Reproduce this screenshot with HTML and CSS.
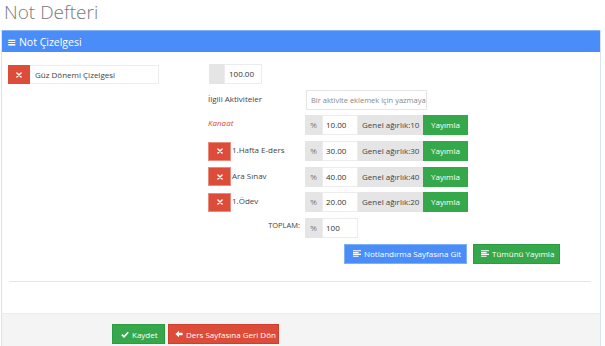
FILE: index.html
```html
<!DOCTYPE html>
<html lang="tr">
<head>
<meta charset="utf-8">
<link rel="stylesheet" href="styles.css">
</head>
<body>
<h1 class="page-title">Not Defteri</h1>
<div class="panel">
  <div class="panel-head"><span class="bars">&#8801;</span> Not Çizelgesi</div>
  <div class="panel-body">
    <div class="layout">
      <div class="left">
        <div class="name-group">
          <span class="btn-x"><svg viewBox="0 0 10 10" width="6" height="6"><path d="M1.5 1.5L8.5 8.5M8.5 1.5L1.5 8.5" stroke="#fff" stroke-width="2.4" stroke-linecap="round"/></svg></span>
          <span class="name-input">Güz Dönemi Çizelgesi</span>
        </div>
      </div>
      <div class="right">
        <div class="row">
          <div class="small-group"><span class="addon blank"></span><span class="field">100.00</span></div>
        </div>
        <div class="row">
          <div class="label top">İlgili Aktiviteler</div>
          <div class="search">Bir aktivite eklemek için yazmaya</div>
        </div>
        <div class="row">
          <div class="label kanaat">Kanaat</div>
          <div class="igroup"><span class="addon pct">%</span><span class="field num">10.00</span><span class="addon weight">Genel ağırlık:10</span><span class="btn-pub">Yayımla</span></div>
        </div>
        <div class="row">
          <div class="label act"><span class="btn-x sm"><svg viewBox="0 0 10 10" width="6" height="6"><path d="M1.5 1.5L8.5 8.5M8.5 1.5L1.5 8.5" stroke="#fff" stroke-width="2.4" stroke-linecap="round"/></svg></span><span class="act-name">1.Hafta E-ders</span></div>
          <div class="igroup"><span class="addon pct">%</span><span class="field num">30.00</span><span class="addon weight">Genel ağırlık:30</span><span class="btn-pub">Yayımla</span></div>
        </div>
        <div class="row">
          <div class="label act"><span class="btn-x sm"><svg viewBox="0 0 10 10" width="6" height="6"><path d="M1.5 1.5L8.5 8.5M8.5 1.5L1.5 8.5" stroke="#fff" stroke-width="2.4" stroke-linecap="round"/></svg></span><span class="act-name">Ara Sınav</span></div>
          <div class="igroup"><span class="addon pct">%</span><span class="field num">40.00</span><span class="addon weight">Genel ağırlık:40</span><span class="btn-pub">Yayımla</span></div>
        </div>
        <div class="row">
          <div class="label act"><span class="btn-x sm"><svg viewBox="0 0 10 10" width="6" height="6"><path d="M1.5 1.5L8.5 8.5M8.5 1.5L1.5 8.5" stroke="#fff" stroke-width="2.4" stroke-linecap="round"/></svg></span><span class="act-name">1.Ödev</span></div>
          <div class="igroup"><span class="addon pct">%</span><span class="field num">20.00</span><span class="addon weight">Genel ağırlık:20</span><span class="btn-pub">Yayımla</span></div>
        </div>
        <div class="row">
          <div class="label total">TOPLAM:</div>
          <div class="igroup"><span class="addon pct">%</span><span class="field num">100</span></div>
        </div>
        <div class="row actions">
          <span class="btn blue"><svg class="ico" viewBox="0 0 10 8" width="8" height="7"><path d="M0 0.6h10M0 2.9h7M0 5.1h10M0 7.4h7" stroke="#fff" stroke-width="1.4"/></svg>Notlandırma Sayfasına Git</span>
          <span class="btn green"><svg class="ico" viewBox="0 0 10 8" width="8" height="7"><path d="M0 0.6h10M0 2.9h7M0 5.1h10M0 7.4h7" stroke="#fff" stroke-width="1.4"/></svg>Tümünü Yayımla</span>
        </div>
      </div>
    </div>
    <hr class="sep">
  </div>
  <div class="panel-foot">
    <span class="btn green save"><svg class="ico" viewBox="0 0 10 8" width="8" height="7"><path d="M1 4.2L3.8 7L9 1.2" stroke="#fff" stroke-width="2" fill="none"/></svg>Kaydet</span>
    <span class="btn red back"><svg class="ico" viewBox="0 0 10 10" width="8" height="8"><path d="M0.5 5L5 0.8V3.3H9.5V6.7H5V9.2Z" fill="#fff"/></svg>Ders Sayfasına Geri Dön</span>
  </div>
</div>
</body>
</html>
```

FILE: styles.css
```css
html, body {
  margin: 0;
  padding: 0;
  background: #fff;
  overflow: hidden;
}
body {
  font-family: "Open Sans", "DejaVu Sans", sans-serif;
  font-size: 8px;
  color: #333;
  width: 605px;
  height: 346px;
}
.page-title {
  margin: 0;
  padding: 0 0 0 4px;
  height: 30px;
  font-size: 19px;
  line-height: 25px;
  font-weight: 300;
  color: #7a7a7a;
}
.panel {
  margin-left: 1px;
  width: 598px;
  border: 1px solid #d6e4fb;
  border-top: none;
  background: #fff;
}
.panel-head {
  height: 22px;
  line-height: 21px;
  background: #4b8df8;
  color: #fff;
  font-size: 10.5px;
  padding-left: 5px;
  border-top: 1px solid #7fb0fa;
  box-sizing: border-box;
}
.panel-head .bars {
  font-size: 11px;
  font-weight: 700;
}
.panel-body {
  padding: 12px 5px 0 6px;
  height: 261px;
  box-sizing: border-box;
}
.layout {
  display: flex;
}
.left {
  width: 200px;
  padding-top: 1px;
}
.name-group {
  display: flex;
  height: 19px;
}
.btn-x {
  width: 22px;
  height: 19px;
  background: #dd4b39;
  display: flex;
  align-items: center;
  justify-content: center;
  flex: none;
}
.btn-x.sm {
  width: 23px;
  height: 19px;
  border: 1px solid #e88a7e;
  box-sizing: border-box;
}
.name-input {
  width: 129px;
  height: 19px;
  box-sizing: border-box;
  border: 1px solid #ececec;
  border-left: none;
  padding-left: 5px;
  line-height: 17px;
  font-size: 8px;
  color: #444;
}
.right {
  display: flex;
  flex-direction: column;
  gap: 5.7px;
}
.row {
  display: flex;
  height: 20px;
  align-items: flex-start;
}
.label {
  width: 97px;
  flex: none;
  color: #444;
}
.label.top {
  padding-top: 3px;
}
.label.kanaat {
  color: #dd4b39;
  font-style: italic;
  padding-top: 2px;
}
.label.act {
  display: flex;
  align-items: center;
  height: 20px;
}
.act-name {
  margin-left: 1px;
  margin-top: -3px;
}
.label.total {
  text-align: right;
  padding-right: 5px;
  box-sizing: border-box;
  padding-top: 2px;
  font-size: 7.5px;
}
.small-group {
  display: flex;
  height: 20px;
  margin-left: 1px;
}
.addon {
  background: #e5e5e5;
  height: 20px;
  line-height: 20px;
  color: #555;
  box-sizing: border-box;
}
.addon.blank {
  width: 15px;
}
.field {
  height: 20px;
  line-height: 18px;
  border: 1px solid #ececec;
  box-sizing: border-box;
  background: #fff;
  color: #333;
}
.small-group .field {
  width: 38px;
  padding-left: 4px;
}
.search {
  width: 121px;
  height: 20px;
  margin-left: 1px;
  border: 1px solid #e5e5e5;
  box-sizing: border-box;
  line-height: 18px;
  padding-left: 4px;
  color: #888;
  font-size: 7.5px;
  white-space: nowrap;
  overflow: hidden;
}
.igroup {
  display: flex;
  height: 20px;
}
.addon.pct {
  width: 17px;
  text-align: center;
  color: #777;
}
.field.num {
  width: 36px;
  padding-left: 3px;
}
.addon.weight {
  width: 65px;
  padding-left: 4px;
  font-size: 8px;
  color: #444;
  white-space: nowrap;
  overflow: hidden;
}
.btn-pub {
  width: 45px;
  height: 20px;
  line-height: 20px;
  background: #35a84b;
  color: #fff;
  text-align: center;
}
.actions {
  padding-left: 136px;
  gap: 6px;
}
.btn {
  display: inline-flex;
  align-items: center;
  height: 20px;
  box-sizing: border-box;
  color: #fff;
  padding: 0 6px;
  white-space: nowrap;
}
.btn .ico {
  flex: none;
  margin-right: 3px;
}
.btn.blue {
  width: 123px;
  background: #4b8df8;
  border: 1px solid #7fb0fa;
  padding-left: 8px;
}
.btn.green {
  background: #35a84b;
  border: 1px solid #2f9a44;
}
.actions .btn.green {
  width: 87px;
  padding-left: 7px;
}
.sep {
  margin: 17px 4px 0 1px;
  border: none;
  border-top: 1px solid #e6e6e6;
  height: 0;
}
.panel-foot {
  height: 40px;
  background: #f4f4f4;
  border-top: 1px solid #ececec;
  padding: 10px 0 0 110px;
  box-sizing: border-box;
  display: flex;
  gap: 3px;
  align-items: flex-start;
}
.btn.save {
  width: 53px;
  padding-left: 8px;
}
.btn.red {
  background: #dd4b39;
  border: 1px solid #d03e2d;
  width: 111px;
  padding-left: 6px;
}
```
